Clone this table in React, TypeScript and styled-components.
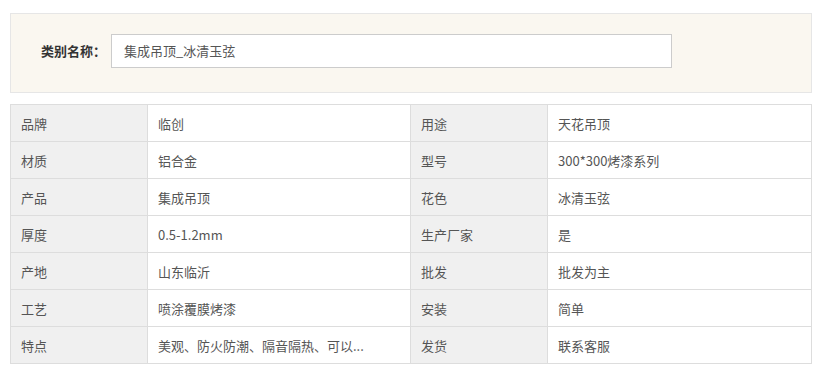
import React from 'react'
import styled, { createGlobalStyle } from 'styled-components'

const GlobalStyle = createGlobalStyle`
    body {
        margin: 0;
        background: #fff;
        font-family: 'Noto Sans CJK SC', 'Microsoft YaHei', sans-serif;
        color: #333;
    }
`

const Page = styled.div`
    width: 802px;
    padding: 13px 0 0 10px;
`

const CategoryPanel = styled.div`
    box-sizing: border-box;
    height: 80px;
    padding: 20px 0 0 30px;
    display: flex;
    align-items: flex-start;
    background: #faf7f0;
    border: 1px solid #e6e6e6;

    .category__label {
        width: 70px;
        line-height: 34px;
        font-size: 13px;
        font-weight: bold;
        color: #333;
    }
    .category__input {
        box-sizing: border-box;
        width: 561px;
        height: 34px;
        padding: 0 12px;
        line-height: 32px;
        font-size: 13px;
        color: #555;
        background: #fff;
        border: 1px solid #ccc;
    }
`

const SpecTable = styled.table`
    width: 802px;
    margin-top: 11px;
    border-collapse: collapse;
    table-layout: fixed;
    font-size: 13px;

    td {
        box-sizing: border-box;
        height: 37px;
        padding: 0 10px;
        border: 1px solid #ddd;
        color: #555;
        white-space: nowrap;
        overflow: hidden;
    }
`

const LabelCell = styled.td`
    width: 137px;
    background: #f0f0f0;
`

const ValueCell = styled.td<{ $wide?: boolean }>`
    width: ${(p) => (p.$wide ? 264 : 263)}px;
    background: #fff;
`

const specs: [string, string, string, string][] = [
    ['品牌', '临创', '用途', '天花吊顶'],
    ['材质', '铝合金', '型号', '300*300烤漆系列'],
    ['产品', '集成吊顶', '花色', '冰清玉弦'],
    ['厚度', '0.5-1.2mm', '生产厂家', '是'],
    ['产地', '山东临沂', '批发', '批发为主'],
    ['工艺', '喷涂覆膜烤漆', '安装', '简单'],
    ['特点', '美观、防火防潮、隔音隔热、可以...', '发货', '联系客服'],
]

const App = () => {
    return (
        <>
            <GlobalStyle />
            <Page>
                <CategoryPanel>
                    <span className='category__label'>类别名称：</span>
                    <div className='category__input'>集成吊顶_冰清玉弦</div>
                </CategoryPanel>
                <SpecTable>
                    <tbody>
                        {specs.map(([k1, v1, k2, v2]) => (
                            <tr key={k1}>
                                <LabelCell>{k1}</LabelCell>
                                <ValueCell>{v1}</ValueCell>
                                <LabelCell>{k2}</LabelCell>
                                <ValueCell $wide>{v2}</ValueCell>
                            </tr>
                        ))}
                    </tbody>
                </SpecTable>
            </Page>
        </>
    )
}

export default App
